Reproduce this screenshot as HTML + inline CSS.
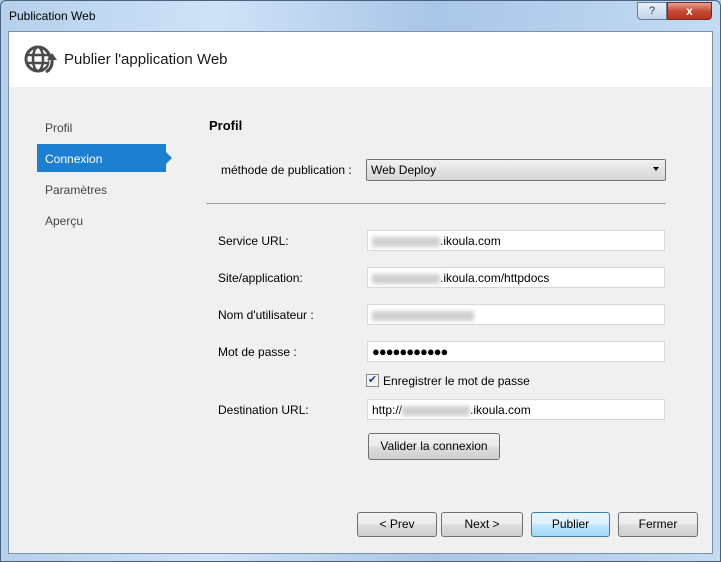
<!DOCTYPE html><html><head><style>
*{margin:0;padding:0;box-sizing:border-box}
body{width:721px;height:562px;font-family:"Liberation Sans",sans-serif;font-size:12px;color:#000;position:relative;overflow:hidden;background:#a9c8e8}
.frame{position:absolute;inset:0;background:linear-gradient(90deg,#b5d0ec,#cfe2f6 30%,#a8c6e6 60%,#c4dbf3);border:1px solid #4a6180;border-radius:6px 6px 0 0}
.a{position:absolute}
.t{white-space:nowrap}
.inner{left:8px;top:31px;width:705px;height:523px;background:#f0f0f0;border:1px solid #7c90a8}
.hdr{left:9px;top:32px;width:703px;height:55px;background:#fff}
.in{background:#fff;border:1px solid #d8d8d8;height:21px;left:367px;width:298px;padding:3px 4px;font-size:12px}
.bl{display:inline-block;width:68px;height:10px;background:#cfcfcf;filter:blur(2px);vertical-align:middle}
.btn{border:1px solid #707070;border-radius:3px;background:linear-gradient(#f2f2f2,#ebebeb 50%,#dddddd 51%,#cfcfcf);text-align:center;line-height:23px;font-size:12px}
.lab{left:218px}
</style></head><body>
<div class="frame"></div>
<div class="a t" style="left:9px;top:9px;font-size:12px">Publication Web</div>
<div class="a" style="left:637px;top:2px;width:30px;height:18px;border:1px solid #6a7d96;border-radius:0 0 0 4px;background:linear-gradient(#e8f0f8,#c2d4e8);text-align:center;font-size:11px;color:#334;line-height:16px">?</div>
<div class="a" style="left:667px;top:2px;width:45px;height:18px;border:1px solid #6b2b2b;border-radius:0 0 4px 0;background:linear-gradient(#e8a090,#c74a35 50%,#b8321e);text-align:center;color:#fff;font-weight:bold;line-height:16px">x</div>
<div class="a inner"></div>
<div class="a hdr"></div>
<svg class="a" style="left:24px;top:44px" width="34" height="32" viewBox="0 0 34 32"><circle cx="14" cy="15" r="12" fill="none" stroke="#4a4a4a" stroke-width="3"/><ellipse cx="14" cy="15" rx="5" ry="12" fill="none" stroke="#4a4a4a" stroke-width="2.5"/><line x1="2" y1="11" x2="26" y2="11" stroke="#4a4a4a" stroke-width="2.5"/><line x1="2" y1="19" x2="26" y2="19" stroke="#4a4a4a" stroke-width="2.5"/><path d="M22 29 Q30 24 28 14" fill="none" stroke="#fff" stroke-width="6"/><path d="M22 28 Q29 24 28 15" fill="none" stroke="#4a4a4a" stroke-width="3"/><path d="M23 16 L28 9 L33 16Z" fill="#4a4a4a"/></svg>
<div class="a t" style="left:64px;top:51px;font-size:15px;color:#1a1a1a">Publier l'application Web</div>
<div class="a t" style="left:45px;top:121px;color:#444">Profil</div>
<div class="a" style="left:37px;top:144px;width:129px;height:28px;background:#1c7fd0"></div>
<div class="a" style="left:166px;top:152px;width:0;height:0;border-left:6px solid #1c7fd0;border-top:6px solid transparent;border-bottom:6px solid transparent"></div>
<div class="a t" style="left:45px;top:152px;color:#fff">Connexion</div>
<div class="a t" style="left:45px;top:183px;color:#444">Paramètres</div>
<div class="a t" style="left:45px;top:214px;color:#444">Aperçu</div>
<div class="a t" style="left:209px;top:118px;font-weight:bold;font-size:13px">Profil</div>
<div class="a t" style="left:221px;top:163px">méthode de publication :</div>
<div class="a" style="left:366px;top:159px;width:300px;height:22px;border:1px solid #707070;border-radius:2px;background:linear-gradient(#f2f2f2,#e3e3e3 50%,#d6d6d6);padding:3px 4px">Web Deploy<span style="position:absolute;right:6px;top:7px;border-top:4px solid #000;border-left:3px solid transparent;border-right:3px solid transparent"></span></div>
<div class="a" style="left:206px;top:203px;width:460px;height:1px;background:#a0a0a0"></div>
<div class="a t lab" style="top:234px">Service URL:</div>
<div class="a in" style="top:230px"><span class="bl"></span>.ikoula.com</div>
<div class="a t lab" style="top:271px">Site/application:</div>
<div class="a in" style="top:267px"><span class="bl"></span>.ikoula.com/httpdocs</div>
<div class="a t lab" style="top:308px">Nom d'utilisateur :</div>
<div class="a in" style="top:304px"><span class="bl" style="width:102px"></span></div>
<div class="a t lab" style="top:345px">Mot de passe :</div>
<div class="a in" style="top:341px;font-size:13px;letter-spacing:-1px;line-height:13px">●●●●●●●●●●●</div>
<div class="a" style="left:366px;top:374px;width:13px;height:13px;border:1px solid #8a8a8a;background:#f4f4f4;color:#243e7c;font-size:11px;line-height:11px;text-align:center">✔</div>
<div class="a t" style="left:383px;top:374px">Enregistrer le mot de passe</div>
<div class="a t lab" style="top:403px">Destination URL:</div>
<div class="a in" style="top:399px">http://<span class="bl"></span>.ikoula.com</div>
<div class="a btn" style="left:368px;top:433px;width:132px;height:27px;line-height:25px">Valider la connexion</div>
<div class="a btn" style="left:357px;top:512px;width:80px;height:25px">&lt; Prev</div>
<div class="a btn" style="left:441px;top:512px;width:82px;height:25px">Next &gt;</div>
<div class="a btn" style="left:531px;top:512px;width:79px;height:25px;border-color:#3c7fb1;background:linear-gradient(#eaf6fd,#d9f0fc 50%,#bee6fd 51%,#a7d9f5)">Publier</div>
<div class="a btn" style="left:618px;top:512px;width:80px;height:25px">Fermer</div>
</body></html>
